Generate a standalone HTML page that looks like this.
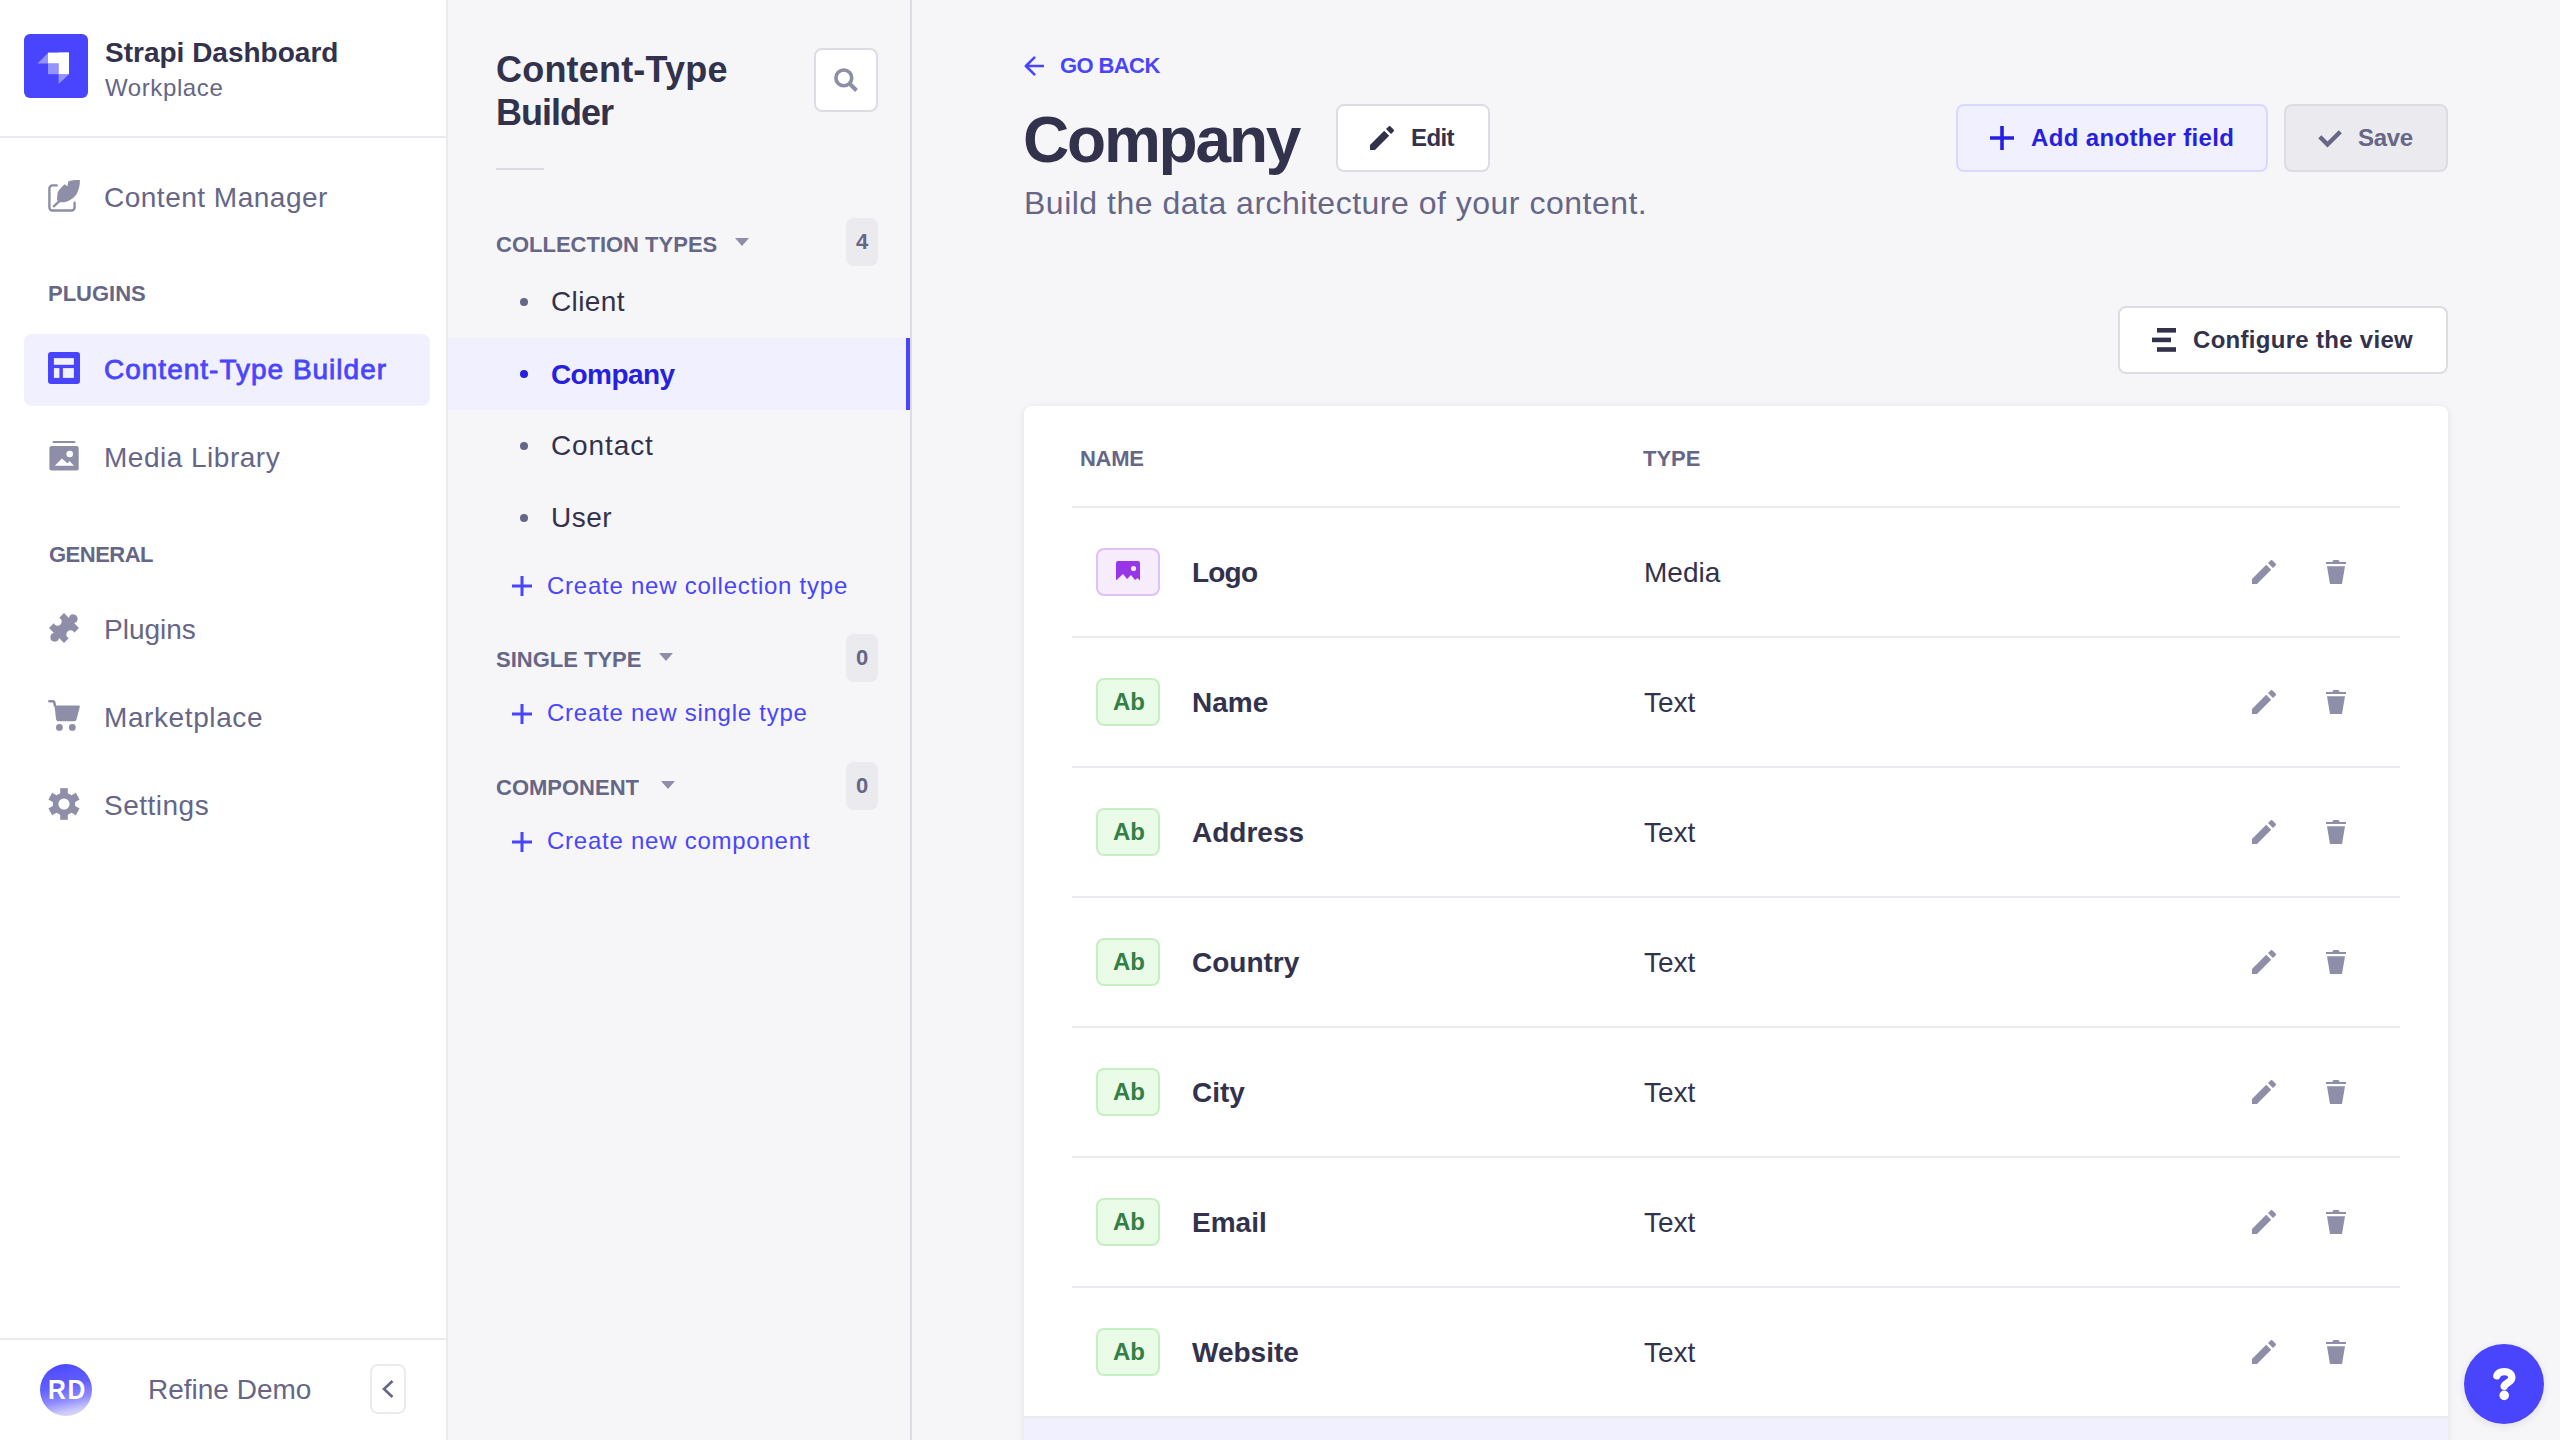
<!DOCTYPE html>
<html><head><meta charset="utf-8">
<style>
*{margin:0;padding:0;box-sizing:border-box}
html,body{width:2560px;height:1440px;overflow:hidden;background:#f6f6f9;font-family:"Liberation Sans",sans-serif}
.a{position:absolute}
.t{position:absolute;white-space:nowrap;line-height:1}
.b{font-weight:bold}
svg{position:absolute;display:block}
#nav{position:absolute;left:0;top:0;width:448px;height:1440px;background:#fff;border-right:2px solid #eaeaef}
#sub{position:absolute;left:448px;top:0;width:464px;height:1440px;background:#f6f6f9;border-right:2px solid #dcdce4}
.n{font-size:28px;color:#666687}
.lab{font-size:22px;color:#666687;font-weight:bold}
.si{font-size:28px;color:#32324d}
.cr{font-size:24px;color:#4945ff}
.badge{position:absolute;left:846px;width:32px;height:48px;border-radius:8px;background:#eaeaef}
.btn{position:absolute;border-radius:8px}
.row{position:absolute;left:1072px;width:1328px;height:2px;background:#eaeaef}
.ic{position:absolute;left:1096px;width:64px;height:48px;border-radius:8px}
.ab{background:#eafbe7;border:2px solid #c6f0c2}
.nm{font-size:28px;color:#32324d;font-weight:bold;left:1192px}
.ty{font-size:28px;color:#32324d;left:1644px}
</style></head><body>

<!-- ============ MAIN NAV ============ -->
<div id="nav"></div>
<div class="a" style="left:0;top:136px;width:446px;height:2px;background:#eaeaef"></div>
<div class="a" style="left:0;top:1338px;width:446px;height:2px;background:#eaeaef"></div>

<!-- logo -->
<svg style="left:24px;top:34px" width="64" height="64" viewBox="0 0 64 64">
  <rect x="0" y="0" width="64" height="64" rx="6" fill="#4945ff"/>
  <path d="M13.5 29.4 L24 19 L24 29.4 Z" fill="#9593ff"/>
  <rect x="24" y="29.4" width="10.6" height="10.8" fill="#9593ff"/>
  <path d="M34.6 40.2 L45 40.2 L34.6 50 Z" fill="#9593ff"/>
  <rect x="24" y="18.6" width="21" height="10.8" fill="#fff"/>
  <rect x="34.6" y="18.6" width="10.4" height="21.6" fill="#fff"/>
</svg>
<div class="t b" style="left:105px;top:39px;font-size:28px;color:#32324d">Strapi Dashboard</div>
<div class="t" style="left:105px;top:76px;font-size:24px;color:#666687;letter-spacing:0.6px">Workplace</div>

<!-- Content manager icon -->
<svg style="left:48px;top:180px" width="32" height="32" viewBox="0 0 32 32">
  <path d="M8.7 5.4 H4.4 A3 3 0 0 0 1.4 8.4 V27.5 A3 3 0 0 0 4.4 30.5 H23.6 A3 3 0 0 0 26.6 27.5 V22.8" fill="none" stroke="#8e8ea9" stroke-width="2.4" stroke-linecap="round"/>
  <path d="M16.5 4.2 L19.4 6.3 L20.3 1.5 C23 0.4 28 0 31.9 0.1 C32 5 31 10 28.5 14.3 C26 18 21 21.5 16.3 22.3 L11.4 22.3 C9.5 21 9 19.5 9 19.5 C9.2 16 9.7 12.6 9.7 12.6 C10.5 10.5 12.8 8 12.8 8 Z" fill="#8e8ea9"/>
  <path d="M10.8 21.6 L5.8 26.3" stroke="#8e8ea9" stroke-width="2.4" stroke-linecap="round"/>
</svg>
<div class="t n" style="left:104px;top:184px;letter-spacing:0.5px">Content Manager</div>

<div class="t lab" style="left:48px;top:283px">PLUGINS</div>

<!-- active CTB -->
<div class="a" style="left:24px;top:334px;width:406px;height:72px;border-radius:8px;background:#f0f0ff"></div>
<svg style="left:48px;top:352px" width="32" height="32" viewBox="0 0 32 32">
  <rect x="0" y="0" width="32" height="32" rx="3" fill="#4945ff"/>
  <rect x="5.9" y="6.1" width="20" height="6.7" fill="#f0f0ff"/>
  <rect x="5.9" y="16.1" width="5.5" height="9.8" fill="#f0f0ff"/>
  <rect x="14.9" y="16.1" width="11" height="9.8" fill="#f0f0ff"/>
</svg>
<div class="t" style="left:104px;top:356px;font-size:28px;color:#4945ff;letter-spacing:1px;-webkit-text-stroke:0.8px #4945ff">Content-Type Builder</div>

<!-- media library -->
<svg style="left:48px;top:440px" width="32" height="32" viewBox="0 0 32 32">
  <path d="M5.5 2 H26.5" stroke="#8e8ea9" stroke-width="2" stroke-linecap="round"/>
  <rect x="1.4" y="6" width="29.3" height="24.6" rx="2" fill="#8e8ea9"/>
  <circle cx="21.7" cy="14" r="3.3" fill="#fff"/>
  <path d="M6.8 25.8 L13.9 18.6 L19.4 23.3 L21.5 20.9 L26 25.8 Z" fill="#fff"/>
</svg>
<div class="t n" style="left:104px;top:444px;letter-spacing:0.5px">Media Library</div>

<div class="t lab" style="left:49px;top:544px;letter-spacing:-0.5px">GENERAL</div>

<!-- plugins -->
<svg style="left:48px;top:612px" width="32" height="32" viewBox="0 0 32 32">
  <path transform="rotate(45 16 16)" d="M5.4 5.4 L12.35 5.4 A4.4 4.4 0 1 1 19.65 5.4 L26.6 5.4 L26.6 12.05 A4.2 4.2 0 1 0 26.6 19.95 L26.6 26.6 L19.65 26.6 A4.4 4.4 0 1 1 12.35 26.6 L5.4 26.6 L5.4 19.95 A4.2 4.2 0 1 0 5.4 12.05 Z" fill="#8e8ea9"/>
</svg>
<div class="t n" style="left:104px;top:616px">Plugins</div>

<!-- marketplace -->
<svg style="left:48px;top:700px" width="32" height="32" viewBox="0 0 32 32">
  <path d="M1.4 1.3 H4.6 C5.6 1.3 6.3 2 6.4 3 L6.9 5.6" fill="none" stroke="#8e8ea9" stroke-width="2.6" stroke-linecap="round"/>
  <path d="M6.5 5.5 H30.6 C31.4 5.5 32 6.2 31.8 7 L28.6 19 C28.2 20.4 27.2 21.3 25.8 21.3 H10.6 C9.2 21.3 8.2 20.4 8 19 Z" fill="#8e8ea9"/>
  <circle cx="11.4" cy="27.4" r="3.4" fill="#8e8ea9"/>
  <circle cx="24.3" cy="27.4" r="3.4" fill="#8e8ea9"/>
</svg>
<div class="t n" style="left:104px;top:704px;letter-spacing:0.6px">Marketplace</div>

<!-- settings -->
<svg style="left:48px;top:788px" width="32" height="32" viewBox="0 0 32 32">
  <circle cx="16" cy="16" r="11.2" fill="#8e8ea9"/>
  <rect x="12.2" y="0.2" width="7.6" height="31.6" fill="#8e8ea9"/>
  <rect x="12.2" y="0.2" width="7.6" height="31.6" fill="#8e8ea9" transform="rotate(60 16 16)"/>
  <rect x="12.2" y="0.2" width="7.6" height="31.6" fill="#8e8ea9" transform="rotate(120 16 16)"/>
  <circle cx="16" cy="16" r="5.6" fill="#fff"/>
</svg>
<div class="t n" style="left:104px;top:792px;letter-spacing:0.5px">Settings</div>

<!-- bottom user -->
<div class="a" style="left:40px;top:1364px;width:52px;height:52px;border-radius:50%;background:linear-gradient(168deg,#4945ff 0%,#625fff 42%,#8d8aff 66%,#c9c6fb 84%,#e8e5fb 100%)"></div>
<div class="t b" style="left:48px;top:1376px;font-size:28px;color:#fff;letter-spacing:2px;transform:scaleX(0.88);transform-origin:0 0">RD</div>
<div class="t n" style="left:148px;top:1376px">Refine Demo</div>
<div class="a" style="left:370px;top:1364px;width:36px;height:50px;border:2px solid #eaeaef;border-radius:8px;background:#fff"></div>
<svg style="left:380px;top:1378px" width="16" height="22" viewBox="0 0 16 22">
  <path d="M12.5 3 L4 11 L12.5 19" fill="none" stroke="#666687" stroke-width="2.6"/>
</svg>

<!-- ============ SUB NAV ============ -->
<div id="sub"></div>
<div class="t b" style="left:496px;top:52px;font-size:36px;color:#32324d;letter-spacing:0.2px">Content-Type</div>
<div class="t b" style="left:496px;top:95px;font-size:36px;color:#32324d;letter-spacing:-1px">Builder</div>
<div class="a" style="left:814px;top:48px;width:64px;height:64px;border:2px solid #dcdce4;border-radius:8px;background:#fff"></div>
<svg style="left:834px;top:68px" width="24" height="24" viewBox="0 0 24 24">
  <circle cx="9.8" cy="9.9" r="7.9" fill="none" stroke="#8e8ea9" stroke-width="3.6"/>
  <path d="M15 15 L22.5 22.5" stroke="#8e8ea9" stroke-width="4"/>
</svg>
<div class="a" style="left:496px;top:168px;width:48px;height:2px;background:#dcdce4"></div>

<div class="t lab" style="left:496px;top:234px">COLLECTION TYPES</div>
<svg style="left:734px;top:238px" width="16" height="10" viewBox="0 0 16 10"><path d="M1 0 H15 L8 8 Z" fill="#8e8ea9"/></svg>
<div class="badge" style="top:218px"></div>
<div class="t lab" style="left:856px;top:231px">4</div>

<div class="a" style="left:520px;top:298px;width:8px;height:8px;border-radius:50%;background:#666687"></div>
<div class="t si" style="left:551px;top:288px;letter-spacing:0.4px">Client</div>

<div class="a" style="left:448px;top:338px;width:462px;height:72px;background:#f0f0ff"></div>
<div class="a" style="left:906px;top:338px;width:4px;height:72px;background:#4945ff"></div>
<div class="a" style="left:520px;top:370px;width:8px;height:8px;border-radius:50%;background:#271fe0"></div>
<div class="t b" style="left:551px;top:361px;font-size:28px;color:#271fe0;letter-spacing:-0.6px">Company</div>

<div class="a" style="left:520px;top:442px;width:8px;height:8px;border-radius:50%;background:#666687"></div>
<div class="t si" style="left:551px;top:432px;letter-spacing:0.9px">Contact</div>
<div class="a" style="left:520px;top:514px;width:8px;height:8px;border-radius:50%;background:#666687"></div>
<div class="t si" style="left:551px;top:504px;letter-spacing:0.5px">User</div>

<svg style="left:512px;top:576px" width="20" height="20" viewBox="0 0 20 20"><path d="M10 0 V20 M0 10 H20" stroke="#4945ff" stroke-width="3"/></svg>
<div class="t cr" style="left:547px;top:574px;letter-spacing:0.75px">Create new collection type</div>

<div class="t lab" style="left:496px;top:649px">SINGLE TYPE</div>
<svg style="left:658px;top:653px" width="16" height="10" viewBox="0 0 16 10"><path d="M1 0 H15 L8 8 Z" fill="#8e8ea9"/></svg>
<div class="badge" style="top:634px"></div>
<div class="t lab" style="left:856px;top:647px">0</div>
<svg style="left:512px;top:704px" width="20" height="20" viewBox="0 0 20 20"><path d="M10 0 V20 M0 10 H20" stroke="#4945ff" stroke-width="3"/></svg>
<div class="t cr" style="left:547px;top:701px;letter-spacing:0.75px">Create new single type</div>

<div class="t lab" style="left:496px;top:777px">COMPONENT</div>
<svg style="left:660px;top:781px" width="16" height="10" viewBox="0 0 16 10"><path d="M1 0 H15 L8 8 Z" fill="#8e8ea9"/></svg>
<div class="badge" style="top:762px"></div>
<div class="t lab" style="left:856px;top:775px">0</div>
<svg style="left:512px;top:832px" width="20" height="20" viewBox="0 0 20 20"><path d="M10 0 V20 M0 10 H20" stroke="#4945ff" stroke-width="3"/></svg>
<div class="t cr" style="left:547px;top:829px;letter-spacing:0.75px">Create new component</div>

<!-- ============ MAIN ============ -->
<svg style="left:1024px;top:56px" width="20" height="20" viewBox="0 0 20 20">
  <path d="M19.6 10 H2 M10.3 1.6 L1.9 10 L10.3 18.4" fill="none" stroke="#4945ff" stroke-width="2.6" stroke-linecap="round" stroke-linejoin="round"/>
</svg>
<div class="t b" style="left:1060px;top:55px;font-size:22px;color:#4945ff;letter-spacing:-0.6px">GO BACK</div>

<div class="t b" style="left:1023px;top:108px;font-size:64px;color:#32324d;letter-spacing:-2.2px">Company</div>
<div class="btn" style="left:1336px;top:104px;width:154px;height:68px;border:2px solid #dcdce4;background:#fff"></div>
<svg style="left:1370px;top:126px" width="24" height="24" viewBox="0 0 24 24">
  <path d="M23.604 3.514c.528.528.528 1.36 0 1.887l-2.622 2.607-4.99-4.99L18.6.396a1.322 1.322 0 0 1 1.887 0l3.117 3.118ZM0 24v-4.99l14.2-14.2 4.99 4.99L4.99 24H0Z" fill="#32324d"/>
</svg>
<div class="t b" style="left:1411px;top:126px;font-size:24px;color:#32324d;letter-spacing:-0.6px">Edit</div>
<div class="t" style="left:1024px;top:187px;font-size:32px;color:#666687;letter-spacing:0.5px">Build the data architecture of your content.</div>

<div class="btn" style="left:1956px;top:104px;width:312px;height:68px;border:2px solid #d9d8ff;background:#f0f0ff"></div>
<svg style="left:1990px;top:126px" width="24" height="24" viewBox="0 0 24 24">
  <path d="M12 0 V24 M0 12 H24" stroke="#271fe0" stroke-width="3.6"/>
</svg>
<div class="t b" style="left:2031px;top:126px;font-size:24px;color:#271fe0;letter-spacing:0.35px">Add another field</div>

<div class="btn" style="left:2284px;top:104px;width:164px;height:68px;border:2px solid #dcdce4;background:#eaeaef"></div>
<svg style="left:2318px;top:126px" width="24" height="24" viewBox="0 0 24 24">
  <path d="M1.8 10.8 L9.5 18.5 L22.3 5.7" fill="none" stroke="#666687" stroke-width="4.4"/>
</svg>
<div class="t b" style="left:2358px;top:126px;font-size:24px;color:#666687;letter-spacing:-0.3px">Save</div>

<div class="btn" style="left:2118px;top:306px;width:330px;height:68px;border:2px solid #dcdce4;background:#fff"></div>
<svg style="left:2152px;top:328px" width="24" height="24" viewBox="0 0 24 24">
  <rect x="5" y="0" width="19" height="4.6" fill="#32324d"/>
  <rect x="0" y="9.6" width="19" height="4.6" fill="#32324d"/>
  <rect x="5" y="19.2" width="19" height="4.6" fill="#32324d"/>
</svg>
<div class="t b" style="left:2193px;top:328px;font-size:24px;color:#32324d;letter-spacing:0.3px">Configure the view</div>

<!-- table card -->
<div class="a" style="left:1024px;top:406px;width:1424px;height:1100px;background:#fff;border-radius:8px;box-shadow:0 2px 8px rgba(33,33,52,0.1)"></div>
<div class="a" style="left:1024px;top:1416px;width:1424px;height:30px;background:#f0f0ff;border-top:2px solid #eaeaef"></div>
<div class="t lab" style="left:1080px;top:448px;letter-spacing:-0.3px">NAME</div>
<div class="t lab" style="left:1643px;top:448px">TYPE</div>
<div class="row" style="top:506px"></div>
<div class="row" style="top:636px"></div>
<div class="row" style="top:766px"></div>
<div class="row" style="top:896px"></div>
<div class="row" style="top:1026px"></div>
<div class="row" style="top:1156px"></div>
<div class="row" style="top:1286px"></div>

<!-- rows -->
<div class="ic" style="top:548px;background:#f6ecfc;border:2px solid #e0c1f4"></div>
<svg style="left:1116px;top:561px" width="24" height="20" viewBox="0 0 24 20">
  <path d="M0 2 A2 2 0 0 1 2 0 H22 A2 2 0 0 1 24 2 V19.5 L21.5 17 L19 19 L15 14 L11 18 L7 13 L0 19.5 Z" fill="#9736e8"/>
  <circle cx="17.5" cy="7.5" r="2.6" fill="#f6ecfc"/>
</svg>
<div class="t nm" style="top:559px;letter-spacing:-0.8px">Logo</div>
<div class="t ty" style="top:559px">Media</div>

<div class="ic ab" style="top:678px"></div>
<div class="t b" style="left:1113px;top:690px;font-size:24px;color:#328048">Ab</div>
<div class="t nm" style="top:689px">Name</div>
<div class="t ty" style="top:689px">Text</div>

<div class="ic ab" style="top:808px"></div>
<div class="t b" style="left:1113px;top:820px;font-size:24px;color:#328048">Ab</div>
<div class="t nm" style="top:819px">Address</div>
<div class="t ty" style="top:819px">Text</div>

<div class="ic ab" style="top:938px"></div>
<div class="t b" style="left:1113px;top:950px;font-size:24px;color:#328048">Ab</div>
<div class="t nm" style="top:949px">Country</div>
<div class="t ty" style="top:949px">Text</div>

<div class="ic ab" style="top:1068px"></div>
<div class="t b" style="left:1113px;top:1080px;font-size:24px;color:#328048">Ab</div>
<div class="t nm" style="top:1079px">City</div>
<div class="t ty" style="top:1079px">Text</div>

<div class="ic ab" style="top:1198px"></div>
<div class="t b" style="left:1113px;top:1210px;font-size:24px;color:#328048">Ab</div>
<div class="t nm" style="top:1209px">Email</div>
<div class="t ty" style="top:1209px">Text</div>

<div class="ic ab" style="top:1328px"></div>
<div class="t b" style="left:1113px;top:1340px;font-size:24px;color:#328048">Ab</div>
<div class="t nm" style="top:1339px">Website</div>
<div class="t ty" style="top:1339px">Text</div>

<svg style="left:2252px;top:560px" width="24" height="24" viewBox="0 0 24 24"><path d="M23.604 3.514c.528.528.528 1.36 0 1.887l-2.622 2.607-4.99-4.99L18.6.396a1.322 1.322 0 0 1 1.887 0l3.117 3.118ZM0 24v-4.99l14.2-14.2 4.99 4.99L4.99 24H0Z" fill="#8e8ea9"/></svg>
<svg style="left:2324px;top:560px" width="24" height="24" viewBox="0 0 24 24"><path d="M3.236 6.149a.2.2 0 0 0-.197.233L6 24h12l2.96-17.618a.2.2 0 0 0-.196-.233H3.236ZM21.8 1.983c.11 0 .2.09.2.2v1.584a.2.2 0 0 1-.2.2H2.2a.2.2 0 0 1-.2-.2V2.183c0-.11.09-.2.2-.2h5.511c.9 0 1.631-1.09 1.631-1.983h5.316c0 .894.73 1.983 1.631 1.983H21.8Z" fill="#8e8ea9"/></svg>
<svg style="left:2252px;top:690px" width="24" height="24" viewBox="0 0 24 24"><path d="M23.604 3.514c.528.528.528 1.36 0 1.887l-2.622 2.607-4.99-4.99L18.6.396a1.322 1.322 0 0 1 1.887 0l3.117 3.118ZM0 24v-4.99l14.2-14.2 4.99 4.99L4.99 24H0Z" fill="#8e8ea9"/></svg>
<svg style="left:2324px;top:690px" width="24" height="24" viewBox="0 0 24 24"><path d="M3.236 6.149a.2.2 0 0 0-.197.233L6 24h12l2.96-17.618a.2.2 0 0 0-.196-.233H3.236ZM21.8 1.983c.11 0 .2.09.2.2v1.584a.2.2 0 0 1-.2.2H2.2a.2.2 0 0 1-.2-.2V2.183c0-.11.09-.2.2-.2h5.511c.9 0 1.631-1.09 1.631-1.983h5.316c0 .894.73 1.983 1.631 1.983H21.8Z" fill="#8e8ea9"/></svg>
<svg style="left:2252px;top:820px" width="24" height="24" viewBox="0 0 24 24"><path d="M23.604 3.514c.528.528.528 1.36 0 1.887l-2.622 2.607-4.99-4.99L18.6.396a1.322 1.322 0 0 1 1.887 0l3.117 3.118ZM0 24v-4.99l14.2-14.2 4.99 4.99L4.99 24H0Z" fill="#8e8ea9"/></svg>
<svg style="left:2324px;top:820px" width="24" height="24" viewBox="0 0 24 24"><path d="M3.236 6.149a.2.2 0 0 0-.197.233L6 24h12l2.96-17.618a.2.2 0 0 0-.196-.233H3.236ZM21.8 1.983c.11 0 .2.09.2.2v1.584a.2.2 0 0 1-.2.2H2.2a.2.2 0 0 1-.2-.2V2.183c0-.11.09-.2.2-.2h5.511c.9 0 1.631-1.09 1.631-1.983h5.316c0 .894.73 1.983 1.631 1.983H21.8Z" fill="#8e8ea9"/></svg>
<svg style="left:2252px;top:950px" width="24" height="24" viewBox="0 0 24 24"><path d="M23.604 3.514c.528.528.528 1.36 0 1.887l-2.622 2.607-4.99-4.99L18.6.396a1.322 1.322 0 0 1 1.887 0l3.117 3.118ZM0 24v-4.99l14.2-14.2 4.99 4.99L4.99 24H0Z" fill="#8e8ea9"/></svg>
<svg style="left:2324px;top:950px" width="24" height="24" viewBox="0 0 24 24"><path d="M3.236 6.149a.2.2 0 0 0-.197.233L6 24h12l2.96-17.618a.2.2 0 0 0-.196-.233H3.236ZM21.8 1.983c.11 0 .2.09.2.2v1.584a.2.2 0 0 1-.2.2H2.2a.2.2 0 0 1-.2-.2V2.183c0-.11.09-.2.2-.2h5.511c.9 0 1.631-1.09 1.631-1.983h5.316c0 .894.73 1.983 1.631 1.983H21.8Z" fill="#8e8ea9"/></svg>
<svg style="left:2252px;top:1080px" width="24" height="24" viewBox="0 0 24 24"><path d="M23.604 3.514c.528.528.528 1.36 0 1.887l-2.622 2.607-4.99-4.99L18.6.396a1.322 1.322 0 0 1 1.887 0l3.117 3.118ZM0 24v-4.99l14.2-14.2 4.99 4.99L4.99 24H0Z" fill="#8e8ea9"/></svg>
<svg style="left:2324px;top:1080px" width="24" height="24" viewBox="0 0 24 24"><path d="M3.236 6.149a.2.2 0 0 0-.197.233L6 24h12l2.96-17.618a.2.2 0 0 0-.196-.233H3.236ZM21.8 1.983c.11 0 .2.09.2.2v1.584a.2.2 0 0 1-.2.2H2.2a.2.2 0 0 1-.2-.2V2.183c0-.11.09-.2.2-.2h5.511c.9 0 1.631-1.09 1.631-1.983h5.316c0 .894.73 1.983 1.631 1.983H21.8Z" fill="#8e8ea9"/></svg>
<svg style="left:2252px;top:1210px" width="24" height="24" viewBox="0 0 24 24"><path d="M23.604 3.514c.528.528.528 1.36 0 1.887l-2.622 2.607-4.99-4.99L18.6.396a1.322 1.322 0 0 1 1.887 0l3.117 3.118ZM0 24v-4.99l14.2-14.2 4.99 4.99L4.99 24H0Z" fill="#8e8ea9"/></svg>
<svg style="left:2324px;top:1210px" width="24" height="24" viewBox="0 0 24 24"><path d="M3.236 6.149a.2.2 0 0 0-.197.233L6 24h12l2.96-17.618a.2.2 0 0 0-.196-.233H3.236ZM21.8 1.983c.11 0 .2.09.2.2v1.584a.2.2 0 0 1-.2.2H2.2a.2.2 0 0 1-.2-.2V2.183c0-.11.09-.2.2-.2h5.511c.9 0 1.631-1.09 1.631-1.983h5.316c0 .894.73 1.983 1.631 1.983H21.8Z" fill="#8e8ea9"/></svg>
<svg style="left:2252px;top:1340px" width="24" height="24" viewBox="0 0 24 24"><path d="M23.604 3.514c.528.528.528 1.36 0 1.887l-2.622 2.607-4.99-4.99L18.6.396a1.322 1.322 0 0 1 1.887 0l3.117 3.118ZM0 24v-4.99l14.2-14.2 4.99 4.99L4.99 24H0Z" fill="#8e8ea9"/></svg>
<svg style="left:2324px;top:1340px" width="24" height="24" viewBox="0 0 24 24"><path d="M3.236 6.149a.2.2 0 0 0-.197.233L6 24h12l2.96-17.618a.2.2 0 0 0-.196-.233H3.236ZM21.8 1.983c.11 0 .2.09.2.2v1.584a.2.2 0 0 1-.2.2H2.2a.2.2 0 0 1-.2-.2V2.183c0-.11.09-.2.2-.2h5.511c.9 0 1.631-1.09 1.631-1.983h5.316c0 .894.73 1.983 1.631 1.983H21.8Z" fill="#8e8ea9"/></svg>

<!-- help -->
<div class="a" style="left:2464px;top:1344px;width:80px;height:80px;border-radius:50%;background:#4945ff;box-shadow:0 2px 8px rgba(33,33,52,0.1)"></div>
<svg style="left:2492px;top:1367px" width="24" height="34" viewBox="0 0 24 34">
  <path d="M4.9 8.8 C5.8 5.8 9 4.6 12.2 4.6 C16.5 4.6 19.8 7 19.8 10.6 C19.8 13.8 17.4 15 15.2 16.2 C13 17.4 12.2 18 12.2 19.2" fill="none" stroke="#fff" stroke-width="7.4" stroke-linecap="round"/>
  <circle cx="12.2" cy="28.4" r="4.8" fill="#fff"/>
</svg>

</body></html>
